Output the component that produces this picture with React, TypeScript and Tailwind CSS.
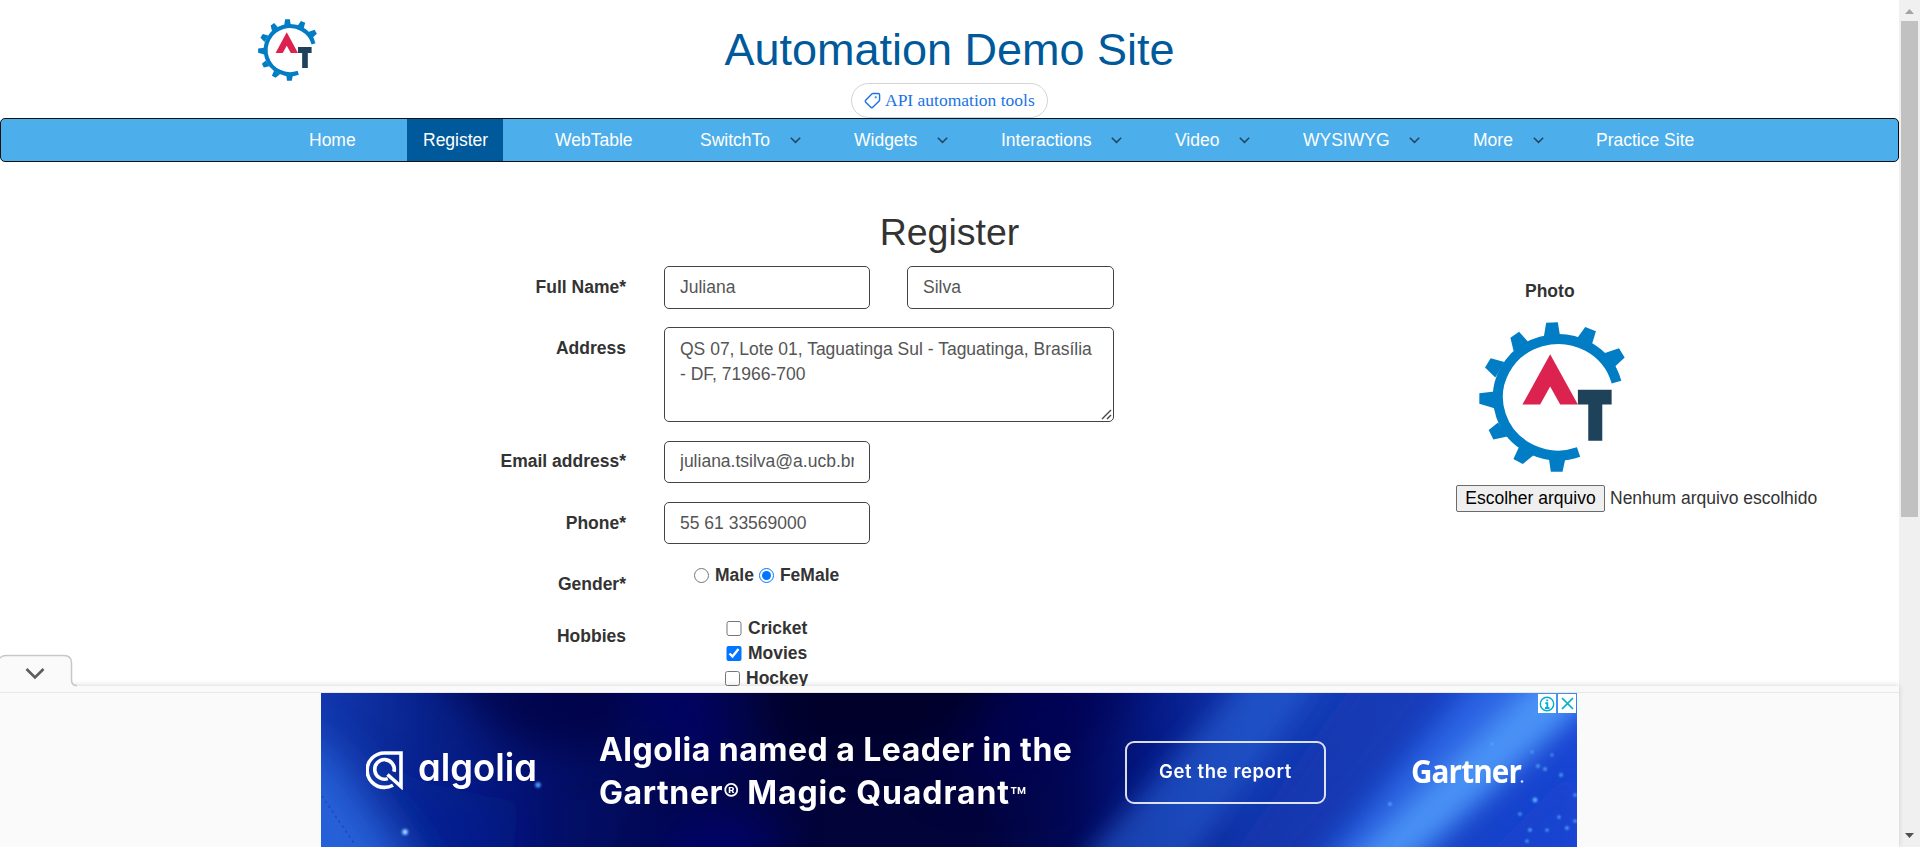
import { Tag } from 'lucide-react';

const navItems = [
  { label: 'Home', cls: 'w-[98px]', menu: false },
  { label: 'Register', cls: 'w-[96px] bg-[#00599b] mr-[36px] pl-[16px]', menu: false },
  { label: 'WebTable', cls: 'w-[161px] pl-[16px]', menu: false },
  { label: 'SwitchTo', cls: 'w-[154px]', menu: true, gap: 'w-[90px]' },
  { label: 'Widgets', cls: 'w-[147px]', menu: true, gap: 'w-[83px]' },
  { label: 'Interactions', cls: 'w-[174px]', menu: true, gap: 'w-[110px]' },
  { label: 'Video', cls: 'w-[128px]', menu: true, gap: 'w-[64px]' },
  { label: 'WYSIWYG', cls: 'w-[170px]', menu: true, gap: 'w-[106px]' },
  { label: 'More', cls: 'w-[123px]', menu: true, gap: 'w-[60px]' },
  { label: 'Practice Site', cls: 'w-[130px]', menu: false },
];

function GearLogo({ className }: { className: string }) {
  return (
    <svg className={className} viewBox="118 185 437 451" preserveAspectRatio="none">
      <path d="M529.5 366 A180.5 175 0 1 0 416 576" fill="none" stroke="#007dc5" strokeWidth="30" />
      <g fill="#007dc5">
        <path d="M319 187L354 186L361 230H312Z" />
        <path d="M436 200L468 213L456 252L410 236Z" />
        <path d="M537 264L554 292L526 318L536 342L512 335L492 300L487 282L495 278Z" />
        <path d="M212 232L238 214L266 246L222 274Z" />
        <path d="M136 322L153 294L194 305L167 352Z" />
        <path d="M119 399L164 394V444L119 431Z" />
        <path d="M147 510L175 487L203 529L161 538Z" />
        <path d="M221 597L237 562L282 585L249 612Z" />
        <path d="M327 594H377L368 635H333Z" />
      </g>
      <path d="M331 282L414 433H361L331 379L301 433H248Z" fill="#dc234f" />
      <path d="M414 389H515V433H487V542H445V433H414Z" fill="#1f425b" />
    </svg>
  );
}

function NavChevron() {
  return (
    <svg className="h-[7px] w-[11px]" viewBox="0 0 11 7" fill="none">
      <path d="M0.8 0.8L5.5 5.4L10.2 0.8" stroke="#23465e" strokeWidth="1.5" />
    </svg>
  );
}

function Label({ children, className = '' }: { children: string; className?: string }) {
  const star = children.endsWith('*');
  return (
    <div className={`w-[626px] shrink-0 text-right font-bold ${className}`}>
      {star ? children.slice(0, -1) : children}
      {star && <span>*</span>}
    </div>
  );
}

const inputCls = 'rounded-[5px] border border-[#444] bg-white px-[15px] text-[17.5px] text-[#555]';

function AdBackdrop() {
  return (
    <svg className="absolute inset-0 h-full w-full" viewBox="0 0 1256 154" preserveAspectRatio="none">
      <defs>
        <linearGradient id="base" x1="0" x2="1">
          <stop offset="0" stopColor="#1238ae" />
          <stop offset="0.08" stopColor="#08238e" />
          <stop offset="0.18" stopColor="#03106c" />
          <stop offset="0.28" stopColor="#020750" />
          <stop offset="0.4" stopColor="#020338" />
          <stop offset="0.52" stopColor="#02033a" />
          <stop offset="0.6" stopColor="#020858" />
          <stop offset="0.66" stopColor="#051a86" />
          <stop offset="0.74" stopColor="#1236ae" />
          <stop offset="0.85" stopColor="#153fbd" />
          <stop offset="1" stopColor="#1a46d4" />
        </linearGradient>
        <filter id="b14" x="-50%" y="-50%" width="200%" height="200%">
          <feGaussianBlur stdDeviation="12" />
        </filter>
        <filter id="b24" x="-50%" y="-50%" width="200%" height="200%">
          <feGaussianBlur stdDeviation="22" />
        </filter>
        <filter id="b1">
          <feGaussianBlur stdDeviation="0.9" />
        </filter>
      </defs>
      <rect width="1256" height="154" fill="url(#base)" />
      <g filter="url(#b24)">
        <path d="M-60 30L10 60L110 200H-60Z" fill="#2660d8" />
        <path d="M100 -40H330L290 60L190 50Z" fill="#01043e" opacity="0.7" />
        <path d="M60 80L200 110L180 230H100Z" fill="#0618a0" opacity="0.35" />
        <path d="M300 -20L390 -20L420 90L350 60Z" fill="#02006e" opacity="0.6" />
        <path d="M370 120L460 130L450 180H330Z" fill="#02008a" opacity="0.5" />
        <path d="M440 -30H690L620 60H460Z" fill="#010226" opacity="0.8" />
        <path d="M690 -20H830L720 90H620Z" fill="#020a56" opacity="0.6" />
      </g>
      <g filter="url(#b14)">
        <path d="M930 -20L1005 -20L860 180H750Z" fill="#2a60d4" opacity="0.6" />
        <path d="M1040 -20L1130 -20L960 180H900Z" fill="#1534aa" opacity="0.35" />
        <path d="M1160 -20L1256 -20V20L1090 180H990Z" fill="#3472ef" opacity="0.7" />
        <path d="M1222 -20L1280 -20V0L1070 180H1020Z" fill="#55a5fc" opacity="0.7" />
        <path d="M1256 70V180H1150Z" fill="#1c44d0" opacity="0.5" />
      </g>
      <path d="M1 103L34 152" stroke="#122f9c" strokeWidth="1.2" strokeDasharray="2 4" opacity="0.6" />
      <g fill="#5cb0ff" filter="url(#b1)">
        <circle cx="84" cy="139" r="3.5" fill="#3f86f0" />
        <circle cx="84" cy="139" r="1.7" fill="#cfe8ff" />
        <circle cx="217" cy="92" r="2.8" fill="#4b94f8" />
        <circle cx="1069" cy="111" r="1.7" />
        <circle cx="1171" cy="51" r="1.3" />
        <circle cx="1211" cy="59" r="1.3" />
        <circle cx="1217" cy="73" r="1.7" />
        <circle cx="1224" cy="76" r="1.7" />
        <circle cx="1240" cy="82" r="1.7" />
        <circle cx="1231" cy="62" r="1.3" />
        <circle cx="1214" cy="107" r="2.4" />
        <circle cx="1199" cy="121" r="1.6" />
        <circle cx="1238" cy="124" r="1.6" />
        <circle cx="1254" cy="128" r="1.6" />
        <circle cx="1209" cy="137" r="1.8" />
        <circle cx="1226" cy="137" r="1.6" />
        <circle cx="1246" cy="135" r="1.8" />
        <circle cx="1206" cy="148" r="1.6" />
        <circle cx="1254" cy="102" r="1.5" />
      </g>
    </svg>
  );
}

function AdBanner() {
  return (
    <div className="relative h-[154px] w-[1256px] overflow-hidden bg-[#030a55] text-white">
      <AdBackdrop />
      <div className="relative flex h-full items-start">
        <svg className="ml-[45px] mt-[58px] h-[39px] w-[37px] shrink-0" viewBox="0 0 37 39" fill="none">
          <path
            d="M27 34.2C24.5 35.6 21.5 36.4 18.3 36.4A17.2 17.2 0 0 1 18.3 2H35V35.5L21.5 23.5"
            stroke="#fff"
            strokeWidth="3.6"
          />
          <path d="M21.8 27.6A9.8 9.8 0 1 1 28 20.8" stroke="#fff" strokeWidth="3.6" />
        </svg>
        <svg className="ml-[14px] mt-[48px] h-[60px] w-[124px] shrink-0" viewBox="0 0 124 60">
          <text
            x="1"
            y="40"
            textLength="119"
            lengthAdjust="spacingAndGlyphs"
            fill="#fff"
            className="font-['Inter'] text-[38px] font-semibold [font-feature-settings:'cv11']"
          >
            algolia
          </text>
        </svg>
        <div className="ml-[58px] mt-[35px] w-[519px] whitespace-nowrap font-['Inter'] text-[32px] font-bold leading-[43px]">
          <div className="tracking-[0.48px]">Algolia named a Leader in the</div>
          <div className="flex tracking-[0.6px]">
            Gartner<span className="text-[24px] font-semibold tracking-normal">®</span>
            <span className="ml-[8px] tracking-[0.9px]">Magic Quadrant</span>
            <span className="relative top-[5px] text-[27px] font-medium tracking-normal">™</span>
          </div>
        </div>
        <div className="ml-[7px] mt-[48px] flex h-[63px] w-[201px] items-center justify-center whitespace-nowrap rounded-[9px] border-2 border-white/85 pb-[2px] font-['Inter'] text-[18.5px] font-semibold tracking-[0.6px]">
          Get the report
        </div>
        <svg className="ml-[85px] mt-[54px] h-[48px] w-[116px] shrink-0" viewBox="0 0 116 48">
          <text
            x="0"
            y="36"
            textLength="110"
            lengthAdjust="spacingAndGlyphs"
            fill="#fff"
            className="font-['Open_Sans'] text-[33px] font-bold tracking-[-1px]"
          >
            Gartner
          </text>
          <circle cx="111" cy="34.5" r="1.3" fill="#cfe2ff" />
        </svg>
      </div>
      <div className="absolute right-px top-px flex gap-[2px]">
        <div className="flex h-[19px] w-[18px] items-center justify-center bg-white">
          <svg className="h-[16px] w-[16px]" viewBox="0 0 16 16" fill="none">
            <circle cx="8" cy="8" r="6.7" stroke="#00aecd" strokeWidth="1.4" />
            <path d="M8.2 3.5V5.3M6.3 7.2H8.3V12M6 12H10.4" stroke="#00aecd" strokeWidth="1.8" />
          </svg>
        </div>
        <div className="flex h-[19px] w-[18px] items-center justify-center bg-white">
          <svg className="h-[13px] w-[13px]" viewBox="0 0 13 13" fill="none">
            <path d="M1 1L12 12M12 1L1 12" stroke="#00aecd" strokeWidth="1.7" />
          </svg>
        </div>
      </div>
    </div>
  );
}

export default function App() {
  return (
    <div className="flex h-[847px] w-[1920px] overflow-hidden bg-white font-['Liberation_Sans',Arial,sans-serif] text-[17.5px] leading-[25px] text-[#333]">
      <div className="flex w-[1899px] flex-col">
        <div className="h-[686px] overflow-hidden">
          <header className="relative flex h-[118px] flex-col items-center">
            <div className="absolute left-[257.5px] top-[19px]">
              <GearLogo className="h-[62px] w-[59px]" />
            </div>
            <h1 className="mt-[25px] text-[45px] leading-[50px] text-[#00599b]">Automation Demo Site</h1>
            <div className="mt-[8px] flex h-[35px] w-[197px] items-center rounded-full border border-[#d2d4d7] pl-[12px]">
              <Tag className="h-[17px] w-[17px] rotate-90 text-[#1a73e8]" strokeWidth={2} />
              <span className="ml-[4px] whitespace-nowrap font-['Liberation_Serif',serif] text-[17.5px] text-[#1a73e8]">
                API automation tools
              </span>
            </div>
          </header>

          <nav className="flex h-[44px] rounded-[5px] border border-[#101010] bg-[#4caeeb] pl-[308px] text-[17.5px] text-white">
            {navItems.map((n) => (
              <div key={n.label} className={`flex shrink-0 items-center whitespace-nowrap ${n.cls}`}>
                <span className={n.gap ?? ''}>{n.label}</span>
                {n.menu && <NavChevron />}
              </div>
            ))}
          </nav>

          <h2 className="mt-[49px] text-center text-[37.5px] leading-[42px]">Register</h2>

          <div className="flex">
            <form className="w-[1114px] shrink-0 pt-[13px]">
              <div className="flex">
                <Label className="pt-[9px]">Full Name*</Label>
                <input className={`${inputCls} ml-[38px] h-[43px] w-[206px]`} defaultValue="Juliana" />
                <input className={`${inputCls} ml-[37px] h-[43px] w-[207px]`} defaultValue="Silva" />
              </div>
              <div className="mt-[18px] flex">
                <Label className="pt-[9px]">Address</Label>
                <div className="relative ml-[38px] h-[95px] w-[450px]">
                  <textarea
                    className="block h-[95px] w-[450px] resize-none rounded-[5px] border border-[#444] bg-white px-[15px] py-[9px] text-[17.5px] leading-[25px] text-[#555]"
                    defaultValue="QS 07, Lote 01, Taguatinga Sul - Taguatinga, Brasília - DF, 71966-700"
                  />
                  <svg className="absolute bottom-[2px] right-[2px] h-[11px] w-[11px]" viewBox="0 0 11 11" fill="none">
                    <path d="M1 10L10 1M6 10L10 6" stroke="#444" strokeWidth="1.4" />
                  </svg>
                </div>
              </div>
              <div className="mt-[19px] flex">
                <Label className="pt-[8px]">Email address*</Label>
                <input className={`${inputCls} ml-[38px] h-[42px] w-[206px] pb-[1px]`} defaultValue="juliana.tsilva@a.ucb.br" />
              </div>
              <div className="mt-[19px] flex">
                <Label className="pt-[9px]">Phone*</Label>
                <input className={`${inputCls} ml-[38px] h-[42px] w-[206px]`} defaultValue="55 61 33569000" />
              </div>
              <div className="mt-[19px] flex">
                <Label className="pt-[9px]">Gender*</Label>
                <div className="ml-[68px] flex h-[25px] items-center font-bold">
                  <input type="radio" name="gender" className="h-[15px] w-[15px]" />
                  <span className="ml-[6px]">Male</span>
                  <input type="radio" name="gender" defaultChecked className="ml-[5px] h-[15px] w-[15px]" />
                  <span className="ml-[6px]">FeMale</span>
                </div>
              </div>
              <div className="mt-[19px] flex">
                <Label className="pt-[8px]">Hobbies</Label>
                <div className="ml-[100px] font-bold">
                  <div className="flex h-[25px] items-center">
                    <input type="checkbox" className="h-[15px] w-[16px]" />
                    <span className="ml-[6px]">Cricket</span>
                  </div>
                  <div className="flex h-[25px] items-center">
                    <input type="checkbox" defaultChecked className="h-[15px] w-[16px]" />
                    <span className="ml-[6px]">Movies</span>
                  </div>
                  <div className="-ml-[1px] flex h-[25px] items-center">
                    <input type="checkbox" className="h-[15px] w-[15px]" />
                    <span className="ml-[6px]">Hockey</span>
                  </div>
                </div>
              </div>
            </form>
            <aside className="ml-[342px] pt-[26px]">
              <div className="ml-[69px] font-bold">Photo</div>
              <GearLogo className="ml-[23px] mt-[18px] h-[150px] w-[146px]" />
              <div className="mt-[13px] flex items-center whitespace-nowrap">
                <button className="flex h-[27px] w-[149px] items-center justify-center rounded-[2px] border border-[#6b6b6b] bg-[#efefef] text-[17.5px] text-black">
                  Escolher arquivo
                </button>
                <span className="ml-[5px]">Nenhum arquivo escolhido</span>
              </div>
            </aside>
          </div>
        </div>

        <div className="relative flex h-[161px] flex-col bg-[#fafafa] shadow-[0_-1px_5px_rgba(0,0,0,0.15)]">
          <div className="h-[7px] shrink-0 border-b border-[#e8e8e8]" />
          <svg className="absolute -top-[33px] left-0 h-[35px] w-[82px]" viewBox="0 0 82 35">
            <path d="M0 5Q2 2.5 6 2.5H64Q71.500 2.500 71.5 10V27Q71.5 33 78 33.5V35H0Z" fill="#fafafa" />
            <path d="M0 5Q2 2.5 6 2.5H64Q71.5 2.5 71.5 10V27Q71.5 32.5 77 32.7" fill="none" stroke="#c8c8c8" strokeWidth="1.5" />
            <path d="M26.500 16L35 24.5L43.5 16" fill="none" stroke="#5c5c5c" strokeWidth="2.6" />
          </svg>
          <div className="flex pl-[321px]">
            <AdBanner />
          </div>
        </div>
      </div>

      <div className="flex w-[21px] flex-col items-center bg-[#f0f0f0]">
        <svg className="mt-[9px] h-[5px] w-[9px]" viewBox="0 0 9 5">
          <path d="M0 5L4.5 0L9 5Z" fill="#a3a3a3" />
        </svg>
        <div className="mt-[7px] h-[496px] w-[17px] bg-[#c1c1c1]" />
        <div className="grow" />
        <svg className="mb-[9px] h-[5px] w-[9px]" viewBox="0 0 9 5">
          <path d="M0 0L4.5 5L9 0Z" fill="#505050" />
        </svg>
      </div>
    </div>
  );
}
